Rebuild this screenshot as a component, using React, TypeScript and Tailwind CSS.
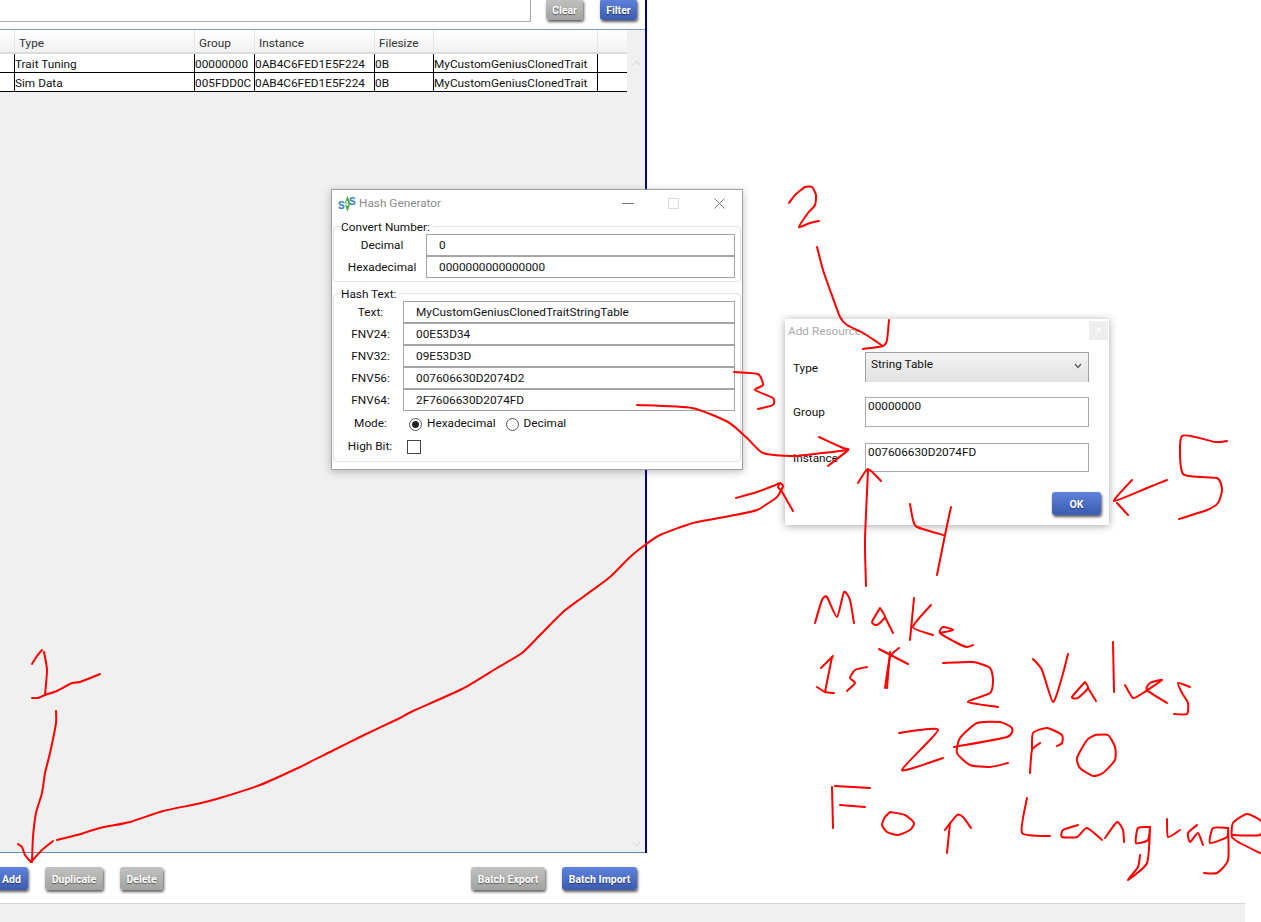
import React from "react";

type P = [number, number];
const strokes: P[][] = [
  // 1
  [[42,650],[37,656],[32,664]],
  [[44,652],[47,670],[45,695]],
  [[32,698],[38,698],[45,695],[57,691],[72,683],[80,682],[100,674]],
  [[56,711],[56,723],[50,753],[45,773],[42,793],[36,813],[33,837],[32,862]],
  [[18,844],[22,847],[25,855],[31,862]],
  [[31,862],[42,850],[53,841]],
  // long curve
  [[57,840],[77,835],[100,828],[130,822],[163,811],[197,804],[220,798],[260,785],[300,767],[330,752],[362,736],[398,719],[413,711],[462,689],[497,668],[522,653],[540,635],[563,612],[583,597],[610,577],[630,557],[645,545],[660,535],[693,523],[730,516],[757,510],[777,497],[781,490]],
  [[736,498],[757,492],[773,486],[780,483],[783,486],[781,490],[778,487],[780,483]],
  [[781,490],[793,511]],
  // 2
  [[789,203],[795,195],[805,187],[812,187],[816,195],[815,205],[808,213],[799,227],[810,223],[819,221]],
  [[817,247],[823,270],[830,290],[840,317],[847,325],[863,333],[877,342],[883,346]],
  [[889,320],[887,340],[883,346],[863,349]],
  // 3
  [[734,372],[758,374],[763,385],[755,390],[773,398],[773,405],[758,409]],
  // fnv arrow
  [[637,405],[692,408],[728,422],[747,438],[763,453],[793,456],[848,450]],
  [[819,437],[843,448],[848,450],[828,466]],
  // up arrow
  [[866,586],[865,540],[868,470]],
  [[858,483],[868,469],[881,481]],
  // 4
  [[910,504],[913,520],[917,527],[943,535]],
  [[951,507],[945,535],[937,575]],
  // 5
  [[1227,441],[1215,442],[1182,436],[1183,474],[1217,478],[1222,490],[1218,503],[1207,510],[1179,519]],
  [[1167,480],[1147,488],[1114,501],[1132,480]],
  [[1117,503],[1128,515]],
  // Make
  [[815,623],[822,600],[827,597],[837,617],[844,592],[850,600],[854,623]],
  [[880,608],[872,622],[877,625],[885,617],[880,608]],
  [[885,617],[893,633]],
  [[914,598],[910,640]],
  [[931,605],[913,627],[933,635]],
  [[940,633],[953,630],[943,627],[940,633],[957,643],[967,647],[973,645]],
  // 1st
  [[821,668],[833,656]],
  [[832,657],[825,692]],
  [[817,687],[825,692],[834,693]],
  [[867,667],[855,670],[850,678],[855,683],[847,691]],
  [[879,649],[908,664]],
  [[899,648],[890,657],[885,688]],
  [[890,652],[887,688]],
  // 2
  [[943,663],[973,662],[990,668],[993,680],[990,693],[968,702],[998,707]],
  // Values
  [[1033,659],[1042,670],[1053,702],[1062,677],[1068,654]],
  [[1085,682],[1072,697],[1078,698],[1088,688],[1085,682]],
  [[1088,688],[1096,701]],
  [[1113,642],[1114,692]],
  [[1125,685],[1133,698],[1143,693],[1162,680],[1150,683],[1147,690],[1167,703]],
  [[1190,687],[1178,683],[1182,693],[1188,703],[1187,714],[1174,714]],
  // zero
  [[899,733],[938,730],[902,770],[943,758]],
  [[954,747],[1007,737],[1012,728],[1000,722],[977,723],[960,738],[957,753],[970,765],[990,767],[1008,763]],
  [[1030,773],[1032,750],[1040,743]],
  [[1032,750],[1033,733],[1047,728],[1062,735],[1062,743],[1057,746]],
  [[1095,735],[1108,735],[1115,747],[1115,760],[1103,773],[1093,776],[1080,768],[1077,758],[1087,740],[1095,735]],
  // For
  [[832,787],[833,828]],
  [[835,786],[870,788]],
  [[840,805],[865,807]],
  [[890,812],[905,815],[914,823],[910,830],[898,835],[887,832],[882,825],[885,817],[890,812]],
  [[947,853],[950,823]],
  [[945,830],[957,815],[963,817],[971,828]],
  // Language
  [[1027,798],[1022,833],[1050,836]],
  [[1078,825],[1063,830],[1062,837],[1077,837],[1087,828],[1102,840]],
  [[1105,838],[1117,822],[1123,830],[1124,842]],
  [[1150,827],[1138,828],[1136,843],[1148,840],[1150,827],[1147,863],[1128,880],[1138,867],[1140,855]],
  [[1167,819],[1168,837],[1180,830]],
  [[1197,825],[1188,833],[1190,842],[1198,833],[1203,845]],
  [[1227,828],[1213,828],[1210,843],[1227,837],[1228,828],[1228,860],[1217,873],[1204,873]],
  [[1233,835],[1260,835],[1262,822],[1247,814],[1233,823],[1232,837],[1240,843],[1260,853]],
];

function smooth(p: P[]): string {
  let d = `M${p[0][0]} ${p[0][1]}`;
  for (let i = 0; i < p.length - 1; i++) {
    const a = p[Math.max(i - 1, 0)];
    const b = p[i];
    const c = p[i + 1];
    const e = p[Math.min(i + 2, p.length - 1)];
    const k = 0.1;
    d += ` C${b[0] + (c[0] - a[0]) * k} ${b[1] + (c[1] - a[1]) * k} ${c[0] - (e[0] - b[0]) * k} ${c[1] - (e[1] - b[1]) * k} ${c[0]} ${c[1]}`;
  }
  return d;
}

function Btn({ label, w, blue, h = "h-[23px]" }: { label: string; w: string; blue?: boolean; h?: string }) {
  return (
    <div
      className={`${w} ${h} shrink-0 rounded-[3px] flex items-center justify-center pt-[2px] text-[10.5px] font-bold text-white shadow-[1px_2px_3px_rgba(0,0,0,0.65)] [text-shadow:0_1px_1px_rgba(0,0,0,0.5)] ${
        blue ? "bg-gradient-to-b from-[#5f83dc] to-[#3b5bb0]" : "bg-gradient-to-b from-[#c2c2c0] to-[#a2a2a0]"
      }`}
    >
      {label}
    </div>
  );
}

const cols = "grid grid-cols-[15px_180px_60px_120px_59px_164px_29px]";

function Row({ cells }: { cells: string[] }) {
  return (
    <div className={`${cols} h-[19px] bg-white border-b border-black text-[11.8px] leading-[20px] text-[#111]`}>
      {["", ...cells, ""].map((c, i) => (
        <div key={i} className="border-r border-black whitespace-nowrap overflow-hidden last:border-r-0">
          {c}
        </div>
      ))}
    </div>
  );
}

function Field({ value, indent }: { value: string; indent: string }) {
  return (
    <div className={`h-[22px] border border-[#a4a4a8] bg-white ${indent} pt-[1px] flex items-center text-[11.8px] text-[#111] whitespace-nowrap`}>
      {value}
    </div>
  );
}

function Group({ title, className, children }: { title: string; className: string; children: React.ReactNode }) {
  return (
    <div className={`relative border border-[#dde3ea] rounded-[4px] mx-[1px] ${className}`}>
      <div className="absolute left-[7px] -top-[7px] bg-white pr-[3px] text-[11.8px] leading-[14px] text-[#111]">{title}</div>
      {children}
    </div>
  );
}

function HashRow({ label, value }: { label: string; value: string }) {
  return (
    <div className="flex h-[22px]">
      <div className="w-[69px] pl-[4px] text-center text-[11.8px] leading-[23px] text-[#111]">{label}</div>
      <div className="w-[332px]">
        <Field value={value} indent="pl-[12px]" />
      </div>
    </div>
  );
}

function HashGenerator() {
  return (
    <div className="absolute left-[331px] top-[189px] w-[412px] h-[281px] bg-white border border-[#a0a0a0] shadow-[0_2px_8px_rgba(0,0,0,0.25)]">
      <div className="h-[28px] flex items-center text-[11.8px] text-[#8a8a8a] pl-[6px]">
        <svg width="20" height="18" viewBox="0 0 20 18" className="shrink-0">
          <path d="M9.5 1 L12.5 8 L9.5 17 L6.5 8 Z" fill="#4fae4a" />
          <text x="0" y="14" fontSize="10" fontWeight="700" fill="#2f7fc9" fontFamily="Liberation Sans, sans-serif">S</text>
          <text x="6.5" y="11" fontSize="7" fontWeight="700" fill="#ffffff" fontFamily="Liberation Sans, sans-serif">4</text>
          <text x="11" y="10" fontSize="10" fontWeight="700" fill="#2f7fc9" fontFamily="Liberation Sans, sans-serif">S</text>
        </svg>
        <span className="ml-[1px]">Hash Generator</span>
        <svg width="110" height="14" viewBox="0 0 110 14" className="ml-[181px] -mt-[2px] shrink-0" fill="none">
          <path d="M0 7.5H12" stroke="#777" />
          <rect x="46.5" y="2.5" width="10" height="10" stroke="#dcdcdc" />
          <path d="M92.5 2.5L102.5 12.5M102.5 2.5L92.5 12.5" stroke="#777" />
        </svg>
      </div>
      <Group title="Convert Number:" className="mt-[8px] h-[56px] pt-[7px]">
        <div className="flex h-[22px]">
          <div className="w-[92px] text-center pl-[4px] text-[11.8px] leading-[23px] text-[#111]">Decimal</div>
          <div className="flex-1 pr-[5px]">
            <Field value="0" indent="pl-[12px]" />
          </div>
        </div>
        <div className="flex h-[22px]">
          <div className="w-[92px] text-center pl-[4px] text-[11.8px] leading-[23px] text-[#111]">Hexadecimal</div>
          <div className="flex-1 pr-[5px]">
            <Field value="0000000000000000" indent="pl-[12px]" />
          </div>
        </div>
      </Group>
      <Group title="Hash Text:" className="mt-[11px] h-[169px] pt-[7px]">
        <HashRow label="Text:" value="MyCustomGeniusClonedTraitStringTable" />
        <HashRow label="FNV24:" value="00E53D34" />
        <HashRow label="FNV32:" value="09E53D3D" />
        <HashRow label="FNV56:" value="007606630D2074D2" />
        <HashRow label="FNV64:" value="2F7606630D2074FD" />
        <div className="flex items-center h-[24px] mt-[1px] text-[11.8px] text-[#111]">
          <div className="w-[75px] pl-[4px] pr-[6px] text-center">Mode:</div>
          <div className="w-[13px] h-[13px] rounded-full border border-[#555] flex items-center justify-center">
            <div className="w-[7px] h-[7px] rounded-full bg-[#222]" />
          </div>
          <span className="ml-[5px]">Hexadecimal</span>
          <div className="w-[13px] h-[13px] rounded-full border border-[#555] ml-[10px]" />
          <span className="ml-[5px]">Decimal</span>
        </div>
        <div className="flex items-center h-[22px] text-[11.8px] text-[#111]">
          <div className="w-[73px] pl-[5px] pr-[6px] text-center whitespace-nowrap">High Bit:</div>
          <div className="w-[14px] h-[14px] border border-[#444]" />
        </div>
      </Group>
    </div>
  );
}

function ResRow({ label, children, className, labelPad = "pt-[2px]" }: { label: string; children: React.ReactNode; className: string; labelPad?: string }) {
  return (
    <div className={`flex items-center ${className}`}>
      <div className={`w-[80px] pl-[8px] ${labelPad} text-[11.8px] text-[#111]`}>{label}</div>
      {children}
    </div>
  );
}

function AddResource() {
  return (
    <div className="absolute left-[785px] top-[319px] w-[324px] h-[206px] bg-white shadow-[0_1px_8px_rgba(0,0,0,0.35)]">
      <div className="flex justify-between h-[24px]">
        <span className="pl-[3px] pt-[4px] text-[11.8px] leading-[16px] text-[#aaa]">Add Resource...</span>
        <div className="w-[19px] h-[19px] mt-[2px] mr-[1px] bg-[#eeeeee] text-white text-[12px] leading-[18px] text-center">×</div>
      </div>
      <ResRow label="Type" className="mt-[9px]" labelPad="pt-[4px]">
        <div className="w-[224px] h-[30px] border-l border-t border-r border-[#a0a0a0] bg-gradient-to-b from-[#f2f2f2] to-[#e3e3e3] pl-[5px] flex justify-between text-[11.8px] leading-[22px] text-[#111]">
          String Table
          <svg width="8" height="6" viewBox="0 0 8 6" className="mt-[10px] mr-[6px]" fill="none">
            <path d="M1 1L4 4.5L7 1" stroke="#555" strokeWidth="1.2" />
          </svg>
        </div>
      </ResRow>
      <ResRow label="Group" className="mt-[15px]">
        <div className="w-[224px] h-[30px] border border-[#a9a9a9] px-[2px] text-[11.8px] leading-[17px] text-[#111]">00000000</div>
      </ResRow>
      <ResRow label="Instance" className="mt-[16px]">
        <div className="w-[224px] h-[29px] border border-[#a9a9a9] px-[2px] text-[11.8px] leading-[17px] text-[#111]">007606630D2074FD</div>
      </ResRow>
      <div className="flex justify-end mt-[20px] pr-[8px]">
        <Btn label="OK" w="w-[49px]" blue />
      </div>
    </div>
  );
}

export default function App() {
  return (
    <div className="relative w-[1261px] h-[922px] bg-white overflow-hidden [font-family:Roboto,'Liberation_Sans',sans-serif]">
      <div className="flex flex-col h-[853px] w-[647px] border-r-2 border-[#00008b]">
        <div className="h-[30px] shrink-0 flex items-start border-b border-[#7f9fc4]">
          <div className="w-[531px] h-[22px] border-r border-b border-[#a8a8a8] shrink-0" />
          <div className="ml-[15px] -mt-[1px]"><Btn label="Clear" w="w-[37px]" h="h-[21px]" /></div>
          <div className="ml-[17px] -mt-[1px]"><Btn label="Filter" w="w-[37px]" h="h-[21px]" blue /></div>
        </div>
        <div className="flex-1 flex bg-[#f0f0f0] border-b border-[#5b8ab5]">
          <div className="w-[627px] shrink-0">
            <div className={`${cols} h-[24px] bg-gradient-to-b from-white to-[#f1f1f1] border-b-2 border-[#dcdcdc] text-[11.8px] leading-[26px] text-[#333]`}>
              {["", "Type", "Group", "Instance", "Filesize", "", ""].map((h, i) => (
                <div key={i} className="border-r border-[#e6e6e6] pl-[4px] last:border-r-0">{h}</div>
              ))}
            </div>
            <Row cells={["Trait Tuning", "00000000", "0AB4C6FED1E5F224", "0B", "MyCustomGeniusClonedTrait"]} />
            <Row cells={["Sim Data", "005FDD0C", "0AB4C6FED1E5F224", "0B", "MyCustomGeniusClonedTrait"]} />
          </div>
          <div className="flex-1 flex flex-col justify-between items-center pt-[30px] pb-[5px]">
            <svg width="9" height="6" viewBox="0 0 9 6" fill="none"><path d="M1 5L4.5 1L8 5" stroke="#cfcfcf" /></svg>
            <svg width="9" height="6" viewBox="0 0 9 6" fill="none"><path d="M1 1L4.5 5L8 1" stroke="#cfcfcf" /></svg>
          </div>
        </div>
      </div>
      <div className="h-[50px] w-[645px] flex items-start pt-[14px] pr-[8px]">
        <div className="-ml-[5px]"><Btn label="Add" w="w-[33px]" blue /></div>
        <div className="ml-[17px]"><Btn label="Duplicate" w="w-[58px]" /></div>
        <div className="ml-[17px]"><Btn label="Delete" w="w-[43px]" /></div>
        <div className="ml-auto"><Btn label="Batch Export" w="w-[74px]" /></div>
        <div className="ml-[17px]"><Btn label="Batch Import" w="w-[75px]" blue /></div>
      </div>
      <div className="w-[1245px] h-[19px] bg-[#f0f0f0] border-t border-[#d4d4d4]" />

      <HashGenerator />
      <AddResource />

      <svg className="absolute left-0 top-0 pointer-events-none" width="1261" height="922" viewBox="0 0 1261 922" fill="none">
        {strokes.map((s, i) => (
          <path key={i} d={smooth(s)} stroke="#ff0000" strokeWidth="2" strokeLinecap="round" strokeLinejoin="round" />
        ))}
      </svg>
    </div>
  );
}
